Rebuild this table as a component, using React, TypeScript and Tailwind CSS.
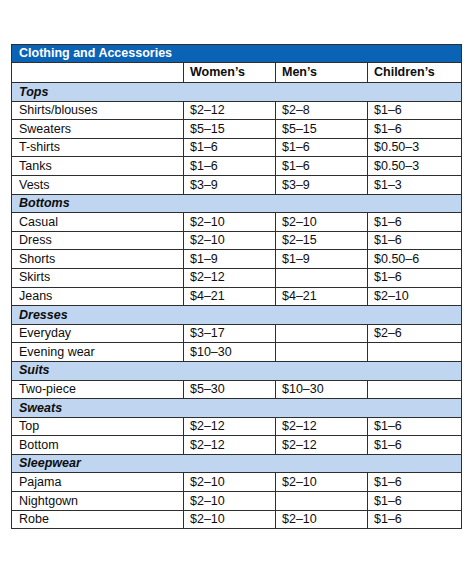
import { Fragment } from 'react';

const sections: { name: string; rows: [string, string, string, string][] }[] = [
  {
    name: 'Tops',
    rows: [
      ['Shirts/blouses', '$2–12', '$2–8', '$1–6'],
      ['Sweaters', '$5–15', '$5–15', '$1–6'],
      ['T-shirts', '$1–6', '$1–6', '$0.50–3'],
      ['Tanks', '$1–6', '$1–6', '$0.50–3'],
      ['Vests', '$3–9', '$3–9', '$1–3'],
    ],
  },
  {
    name: 'Bottoms',
    rows: [
      ['Casual', '$2–10', '$2–10', '$1–6'],
      ['Dress', '$2–10', '$2–15', '$1–6'],
      ['Shorts', '$1–9', '$1–9', '$0.50–6'],
      ['Skirts', '$2–12', '', '$1–6'],
      ['Jeans', '$4–21', '$4–21', '$2–10'],
    ],
  },
  {
    name: 'Dresses',
    rows: [
      ['Everyday', '$3–17', '', '$2–6'],
      ['Evening wear', '$10–30', '', ''],
    ],
  },
  {
    name: 'Suits',
    rows: [['Two-piece', '$5–30', '$10–30', '']],
  },
  {
    name: 'Sweats',
    rows: [
      ['Top', '$2–12', '$2–12', '$1–6'],
      ['Bottom', '$2–12', '$2–12', '$1–6'],
    ],
  },
  {
    name: 'Sleepwear',
    rows: [
      ['Pajama', '$2–10', '$2–10', '$1–6'],
      ['Nightgown', '$2–10', '', '$1–6'],
      ['Robe', '$2–10', '$2–10', '$1–6'],
    ],
  },
];

// shared cell look: thin dark grid lines
const cell = 'border border-[#2e2e2e] px-[6px] py-0 leading-none align-middle';

export default function App() {
  return (
    <div
      className="w-[474px] h-[576px] bg-white pt-[44px] pl-[11px] text-[12.5px] text-[#0d0d0d]"
      style={{ fontFamily: '"Liberation Sans", Arial, sans-serif' }}
    >
      <table className="w-[450px] border-collapse table-fixed">
        <colgroup>
          <col className="w-[172px]" />
          <col className="w-[92px]" />
          <col className="w-[92px]" />
          <col className="w-[94px]" />
        </colgroup>
        <tbody>
          <tr className="h-[18px]">
            <td colSpan={4} className={`${cell} bg-[#0b63b6] text-white font-bold px-[7px]`}>
              Clothing and Accessories
            </td>
          </tr>
          <tr className="h-[20px]">
            <td className={cell}></td>
            <td className={`${cell} font-bold`}>Women’s</td>
            <td className={`${cell} font-bold`}>Men’s</td>
            <td className={`${cell} font-bold`}>Children’s</td>
          </tr>
          {sections.map((s) => (
            <Fragment key={s.name}>
              <tr className="h-[18.6px]">
                <td colSpan={4} className={`${cell} bg-[#c0d5ef] font-bold italic px-[7px]`}>
                  {s.name}
                </td>
              </tr>
              {s.rows.map((r) => (
                <tr key={r[0]} className="h-[18.6px]">
                  <td className={`${cell} px-[7px]`}>{r[0]}</td>
                  <td className={cell}>{r[1]}</td>
                  <td className={cell}>{r[2]}</td>
                  <td className={cell}>{r[3]}</td>
                </tr>
              ))}
            </Fragment>
          ))}
        </tbody>
      </table>
    </div>
  );
}
